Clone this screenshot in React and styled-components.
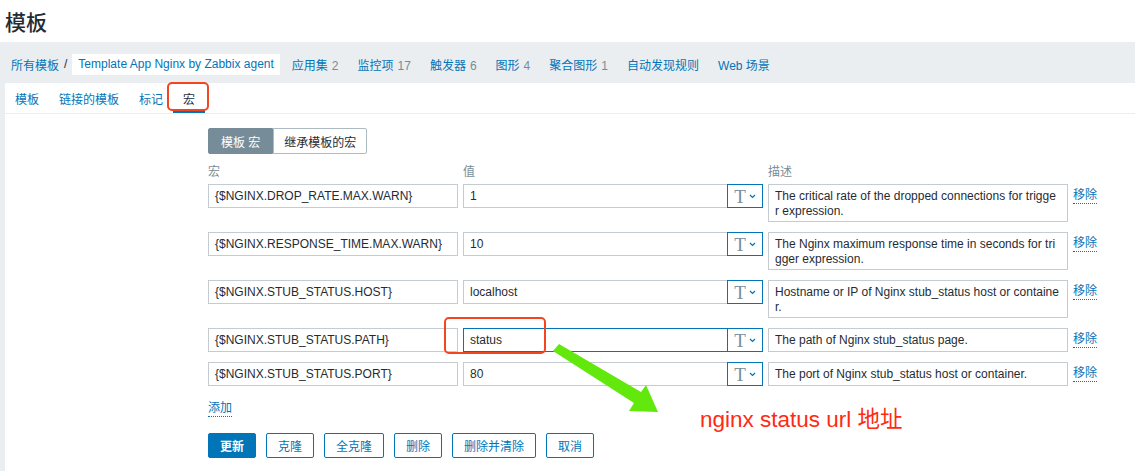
import React from "react";
import styled, { createGlobalStyle } from "styled-components";

const Global = createGlobalStyle`
  html, body { margin: 0; padding: 0; background: #fff; }
  body {
    font-family: "Liberation Sans", Arial, "Noto Sans CJK SC", sans-serif;
    font-size: 12px;
    color: #1f2c33;
  }
  * { box-sizing: border-box; }
`;

const Page = styled.div`
  position: relative;
  width: 1135px;
  height: 471px;
  overflow: hidden;
`;

const Header = styled.header`
  height: 42px;
  display: flex;
  align-items: center;
  padding-left: 5px;
`;

const Title = styled.h1`
  margin: 0;
  font-size: 21px;
  font-weight: 500;
  font-family: "Noto Sans CJK SC", sans-serif;
  color: #1f2c33;
`;

const Main = styled.main`
  background: #ebeef0;
  padding-left: 5px;
  min-height: 429px;
`;

const Breadcrumbs = styled.nav`
  height: 41px;
  display: flex;
  align-items: center;
  padding: 3px 0 0 6px;
`;

const Crumb = styled.a`
  color: #0275b8;
  text-decoration: none;
  white-space: nowrap;
  margin-right: ${(p) => p.$mr || 0}px;
`;

const Sep = styled.span`
  color: #1f2c33;
  margin: 0 5px 0 5px;
`;

const CurrentCrumb = styled.span`
  background: #fff;
  color: #0275b8;
  height: 21px;
  display: flex;
  align-items: center;
  padding: 0 6px;
  margin-right: 12px;
`;

const Count = styled.span`
  color: #768d99;
  margin-left: 4px;
`;

const Panel = styled.section`
  background: #fff;
  min-height: 388px;
`;

const Tabs = styled.div`
  height: 31px;
  display: flex;
  border-bottom: 1px solid #ebeef0;
`;

const Tab = styled.a`
  padding: 0 10px;
  display: flex;
  align-items: center;
  color: ${(p) => (p.$active ? "#1f2c33" : "#0275b8")};
  border-bottom: 3px solid ${(p) => (p.$active ? "#0275b8" : "transparent")};
  padding-top: 3px;
  cursor: pointer;
`;

const Body = styled.div`
  padding: 14px 0 0 203px;
`;

const Segmented = styled.div`
  display: inline-flex;
  height: 26px;
`;

const Segment = styled.button`
  font: inherit;
  height: 26px;
  padding: 0 ${(p) => p.$pad}px;
  border: 1px solid ${(p) => (p.$active ? "#768d99" : "#acbbc2")};
  background: ${(p) => (p.$active ? "#768d99" : "#fff")};
  color: ${(p) => (p.$active ? "#fff" : "#1f2c33")};
  border-radius: ${(p) => (p.$active ? "2px 0 0 2px" : "0 2px 2px 0")};
`;

const Grid = styled.div`
  display: grid;
  grid-template-columns: 250px 300px 300px auto;
  column-gap: 5px;
  row-gap: 10px;
  align-items: start;
  margin-top: 10px;
`;

const HeadCell = styled.div`
  color: #768d99;
  height: 16px;
  line-height: 16px;
  margin-bottom: -6px;
`;

const Field = styled.div`
  height: 24px;
  border: 1px solid ${(p) => (p.$focus ? "#0275b8" : "#c5ccd1")};
  display: flex;
  align-items: center;
  padding: 0 6px;
  white-space: nowrap;
  overflow: hidden;
  background: #fff;
`;

const ValueGroup = styled.div`
  display: flex;
`;

const ValueField = styled(Field)`
  flex: 1;
  border-right: none;
`;

const TypeButton = styled.button`
  width: 36px;
  height: 24px;
  border: 1px solid #0275b8;
  background: #fff;
  display: flex;
  align-items: center;
  justify-content: center;
  gap: 3px;
  padding: 0;
  color: #768d99;
  font-family: "Liberation Serif", "Times New Roman", serif;
  font-size: 19px;
  line-height: 1;
`;

const Desc = styled.div`
  border: 1px solid #c5ccd1;
  min-height: 24px;
  padding: 4px 8px 3px 6px;
  line-height: 14.5px;
  word-break: break-all;
  background: #fff;
`;

const Remove = styled.a`
  color: #0275b8;
  border-bottom: 1px dotted #0275b8;
  justify-self: start;
  margin-top: 4px;
  line-height: 15px;
  cursor: pointer;
`;

const AddLink = styled.a`
  display: inline-block;
  margin-top: 15px;
  color: #0275b8;
  line-height: 15px;
  border-bottom: 1px dotted #0275b8;
  cursor: pointer;
`;

const Buttons = styled.div`
  display: flex;
  gap: 10px;
  margin-top: 16px;
`;

const Button = styled.button`
  font: inherit;
  height: 25px;
  padding: 0 11px;
  border-radius: 2px;
  border: 1px solid #0275b8;
  background: ${(p) => (p.$primary ? "#0275b8" : "#fff")};
  color: ${(p) => (p.$primary ? "#fff" : "#0275b8")};
  font-weight: ${(p) => (p.$primary ? 600 : 400)};
`;

const Mark = styled.div`
  position: absolute;
  border: 2px solid #f1461f;
  border-radius: 5px;
  pointer-events: none;
`;

const Note = styled.div`
  position: absolute;
  left: 700px;
  top: 401px;
  color: #ff2a12;
  font-size: 22.5px;
  font-family: "Liberation Sans", "Noto Sans CJK SC", sans-serif;
  white-space: nowrap;
`;

const Arrow = styled.svg`
  position: absolute;
  left: 0;
  top: 0;
  pointer-events: none;
`;

const Chevron = () => (
  <svg width="7" height="5" viewBox="0 0 7 5">
    <path d="M1 1l2.5 2.5L6 1" fill="none" stroke="#0275b8" strokeWidth="1.2" />
  </svg>
);

const rows = [
  { name: "{$NGINX.DROP_RATE.MAX.WARN}", value: "1", desc: "The critical rate of the dropped connections for trigger expression." },
  { name: "{$NGINX.RESPONSE_TIME.MAX.WARN}", value: "10", desc: "The Nginx maximum response time in seconds for trigger expression." },
  { name: "{$NGINX.STUB_STATUS.HOST}", value: "localhost", desc: "Hostname or IP of Nginx stub_status host or container." },
  { name: "{$NGINX.STUB_STATUS.PATH}", value: "status", desc: "The path of Nginx stub_status page.", focus: true },
  { name: "{$NGINX.STUB_STATUS.PORT}", value: "80", desc: "The port of Nginx stub_status host or container." },
];

const navItems = [
  ["应用集", "2"],
  ["监控项", "17"],
  ["触发器", "6"],
  ["图形", "4"],
  ["聚合图形", "1"],
  ["自动发现规则", null],
  ["Web 场景", null],
];

export default function App() {
  return (
    <Page>
      <Global />
      <Header>
        <Title>模板</Title>
      </Header>
      <Main>
        <Breadcrumbs>
          <Crumb>所有模板</Crumb>
          <Sep>/</Sep>
          <CurrentCrumb>Template App Nginx by Zabbix agent</CurrentCrumb>
          {navItems.map(([label, n]) => (
            <Crumb key={label} $mr={19}>
              {label}
              {n && <Count>{n}</Count>}
            </Crumb>
          ))}
        </Breadcrumbs>
        <Panel>
          <Tabs>
            <Tab>模板</Tab>
            <Tab>链接的模板</Tab>
            <Tab>标记</Tab>
            <Tab $active>宏</Tab>
          </Tabs>
          <Body>
            <Segmented>
              <Segment $active $pad={12}>模板 宏</Segment>
              <Segment $pad={10}>继承模板的宏</Segment>
            </Segmented>
            <Grid>
              <HeadCell>宏</HeadCell>
              <HeadCell>值</HeadCell>
              <HeadCell>描述</HeadCell>
              <HeadCell />
              {rows.map((r) => (
                <React.Fragment key={r.name}>
                  <Field>{r.name}</Field>
                  <ValueGroup>
                    <ValueField $focus={r.focus}>{r.value}</ValueField>
                    <TypeButton>
                      T<Chevron />
                    </TypeButton>
                  </ValueGroup>
                  <Desc>{r.desc}</Desc>
                  <Remove>移除</Remove>
                </React.Fragment>
              ))}
            </Grid>
            <AddLink>添加</AddLink>
            <Buttons>
              <Button $primary>更新</Button>
              <Button>克隆</Button>
              <Button>全克隆</Button>
              <Button>删除</Button>
              <Button>删除并清除</Button>
              <Button>取消</Button>
            </Buttons>
          </Body>
        </Panel>
      </Main>
      <Mark style={{ left: 167, top: 82, width: 42, height: 29 }} />
      <Mark style={{ left: 444, top: 317, width: 102, height: 37 }} />
      <Arrow width="1135" height="471">
        <polygon
          points="553,351 559,344 641,392 646,385 658,412 629,411 634,403"
          fill="#62e80c"
        />
      </Arrow>
      <Note>nginx status url 地址</Note>
    </Page>
  );
}
